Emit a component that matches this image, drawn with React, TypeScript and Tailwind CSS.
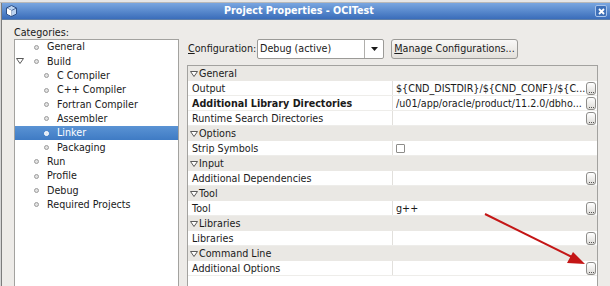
import React from "react";

const Tri = () => (
  <svg width="8" height="6" viewBox="0 0 8 6" className="shrink-0">
    <path d="M0.5 0.5 L7.5 0.5 L4 5.5 Z" fill="white" stroke="#5a5a5a" strokeWidth="1" />
  </svg>
);

const Bullet = ({ light }: { light?: boolean }) => (
  <div
    className={
      "w-[5px] h-[5px] rounded-full shrink-0 " +
      (light ? "bg-[#dfe8f4] border border-[#ffffff]" : "bg-[#e2e2e2] border border-[#9c9c9c]")
    }
  />
);

type TreeItem = { label: string; level: number; expander?: boolean; selected?: boolean };

const tree: TreeItem[] = [
  { label: "General", level: 0 },
  { label: "Build", level: 0, expander: true },
  { label: "C Compiler", level: 1 },
  { label: "C++ Compiler", level: 1 },
  { label: "Fortran Compiler", level: 1 },
  { label: "Assembler", level: 1 },
  { label: "Linker", level: 1, selected: true },
  { label: "Packaging", level: 1 },
  { label: "Run", level: 0 },
  { label: "Profile", level: 0 },
  { label: "Debug", level: 0 },
  { label: "Required Projects", level: 0 },
];

const Ellipsis = () => (
  <div className="w-[10px] h-[13px] rounded-[3px] border border-[#8e8d8a] bg-gradient-to-b from-[#ffffff] to-[#dedcd8] flex items-end justify-center gap-[1px] pb-[1px] shrink-0">
    <span className="w-[1px] h-[1px] bg-[#555]" />
    <span className="w-[1px] h-[1px] bg-[#555]" />
    <span className="w-[1px] h-[1px] bg-[#555]" />
  </div>
);

type Row =
  | { kind: "cat"; label: string }
  | { kind: "prop"; label: string; value?: string; bold?: boolean; btn?: boolean; check?: boolean };

const rows: Row[] = [
  { kind: "cat", label: "General" },
  { kind: "prop", label: "Output", value: "${CND_DISTDIR}/${CND_CONF}/${C...", btn: true },
  { kind: "prop", label: "Additional Library Directories", value: "/u01/app/oracle/product/11.2.0/dbho...", bold: true, btn: true },
  { kind: "prop", label: "Runtime Search Directories", btn: true },
  { kind: "cat", label: "Options" },
  { kind: "prop", label: "Strip Symbols", check: true },
  { kind: "cat", label: "Input" },
  { kind: "prop", label: "Additional Dependencies", btn: true },
  { kind: "cat", label: "Tool" },
  { kind: "prop", label: "Tool", value: "g++", btn: true },
  { kind: "cat", label: "Libraries" },
  { kind: "prop", label: "Libraries", btn: true },
  { kind: "cat", label: "Command Line" },
  { kind: "prop", label: "Additional Options", btn: true },
];

export default function App() {
  return (
    <div className="w-[610px] h-[286px] overflow-hidden bg-[#d4d4d4] relative font-['DejaVu_Sans',sans-serif] text-[9.6px] text-[#1a1a1a] leading-none">
      {/* background sliver */}
      <div className="h-[3px] bg-[#e6e6e6] border-b border-[#b8b8b8]" />
      <div className="flex flex-col h-[283px] ml-[1px] border-l border-[#7c7c7c]">
        {/* title bar */}
        <div className="h-[16px] bg-gradient-to-b from-[#79a6e0] to-[#3a6dba] flex items-center relative shrink-0">
          <div className="ml-[4px] w-[11px] h-[12px] relative">
            <svg width="11" height="12" viewBox="0 0 11 12">
              <path d="M5.5 0.5 L10.5 3 L10.5 9 L5.5 11.5 L0.5 9 L0.5 3 Z" fill="#bcd3f0" stroke="#2e4f85" strokeWidth="1" />
              <path d="M0.5 3 L5.5 5.5 L10.5 3" fill="none" stroke="#2e4f85" strokeWidth="0.8" />
              <path d="M5.5 5.5 L5.5 11.5" stroke="#2e4f85" strokeWidth="0.8" />
              <path d="M1 3.3 L5.5 5.6 L5.5 11 L1 8.7 Z" fill="#ffffff" />
            </svg>
          </div>
          <div className="flex-1 text-center text-white font-bold text-[9.6px] pr-[14px]">Project Properties - OCITest</div>
          <div className="mr-[3px] w-[12px] h-[12px] rounded-[2px] border border-[#a9c4ea] bg-[#3d6fb8] flex items-center justify-center">
            <svg width="7" height="7" viewBox="0 0 7 7">
              <path d="M1 1 L6 6 M6 1 L1 6" stroke="white" strokeWidth="1.8" />
            </svg>
          </div>
        </div>
        <div className="h-[1px] bg-[#5f7fa8] shrink-0" />
        {/* body */}
        <div className="flex-1 bg-[#edebe8] flex min-h-0">
          {/* left column */}
          <div className="pl-[12px] w-[177px] flex flex-col shrink-0">
            <div className="pt-[6px] h-[19px] flex items-center">
              <span>Categories:</span>
            </div>
            <div className="flex-1 bg-white border border-[#a3a29f] border-b-0 pt-[0px]">
              {tree.map((t) => (
                <div
                  key={t.label}
                  className={
                    "h-[14.33px] flex items-center " +
                    (t.selected ? "bg-gradient-to-b from-[#5a93d4] to-[#3f7bc4] text-white" : "")
                  }
                >
                  <div className={"shrink-0 flex items-center " + (t.level === 0 ? "w-[19px]" : "w-[29px]")}>
                    {t.expander && (
                      <div className="ml-[1px]">
                        <Tri />
                      </div>
                    )}
                  </div>
                  <Bullet light={t.selected} />
                  <span className="ml-[8px] whitespace-nowrap">{t.label}</span>
                </div>
              ))}
            </div>
          </div>
          {/* right column */}
          <div className="ml-[8px] pt-[19px] flex flex-col w-[411px] shrink-0">
            <div className="flex items-center h-[20px]">
              <span className="ml-[1px] w-[69px] whitespace-nowrap">
                <span className="underline underline-offset-1">C</span>onfiguration:
              </span>
              <div className="w-[127px] h-[20px] bg-white border border-[#9b9a97] rounded-[2px] flex items-stretch">
                <span className="flex-1 flex items-center pl-[2px]">Debug (active)</span>
                <div className="w-[19px] border-l border-[#b0afac] flex items-center justify-center">
                  <svg width="7" height="4" viewBox="0 0 7 4">
                    <path d="M0 0 L7 0 L3.5 4 Z" fill="#1a1a1a" />
                  </svg>
                </div>
              </div>
              <div className="ml-[7px] w-[127px] h-[20px] rounded-[3px] border border-[#9b9a97] bg-gradient-to-b from-[#f9f8f7] to-[#e3e0db] flex items-center justify-center">
                <span>
                  <span className="underline underline-offset-1">M</span>anage Configurations...
                </span>
              </div>
            </div>
            {/* property sheet */}
            <div className="mt-[6px] flex-1 border border-[#a3a29f] border-b-0 bg-white">
              {rows.map((r, i) =>
                r.kind === "cat" ? (
                  <div key={i} className="h-[15px] bg-[#eae8e4] flex items-center pl-[2px] leading-[13px]">
                    <Tri />
                    <span className="ml-[1px]">{r.label}</span>
                  </div>
                ) : (
                  <div key={i} className="h-[15px] flex items-stretch border-b border-[#eeedea] leading-[13px]">
                    <div className={"w-[204px] flex items-center pl-[4px] whitespace-nowrap " + (r.bold ? "font-bold" : "")}>
                      {r.label}
                    </div>
                    <div className="w-[1px] bg-[#e2e0dc]" />
                    <div className="flex-1 flex items-center pl-[3px] pr-[1px]">
                      <div className="flex-1 whitespace-nowrap overflow-hidden flex items-center h-[14px]">
                        {r.check ? (
                          <div className="w-[9px] h-[9px] border border-[#8e8d8a] bg-white rounded-[1px]" />
                        ) : (
                          r.value
                        )}
                      </div>
                      {r.btn && <Ellipsis />}
                    </div>
                  </div>
                )
              )}
            </div>
          </div>
          <div className="flex-1" />
        </div>
      </div>
      {/* red arrow overlay */}
      <svg className="absolute left-0 top-0 pointer-events-none" width="610" height="286">
        <line x1="485" y1="214" x2="572" y2="257" stroke="#c41616" strokeWidth="2" />
        <path d="M585 264 L567 263 L573 252 Z" fill="#c41616" />
      </svg>
    </div>
  );
}
